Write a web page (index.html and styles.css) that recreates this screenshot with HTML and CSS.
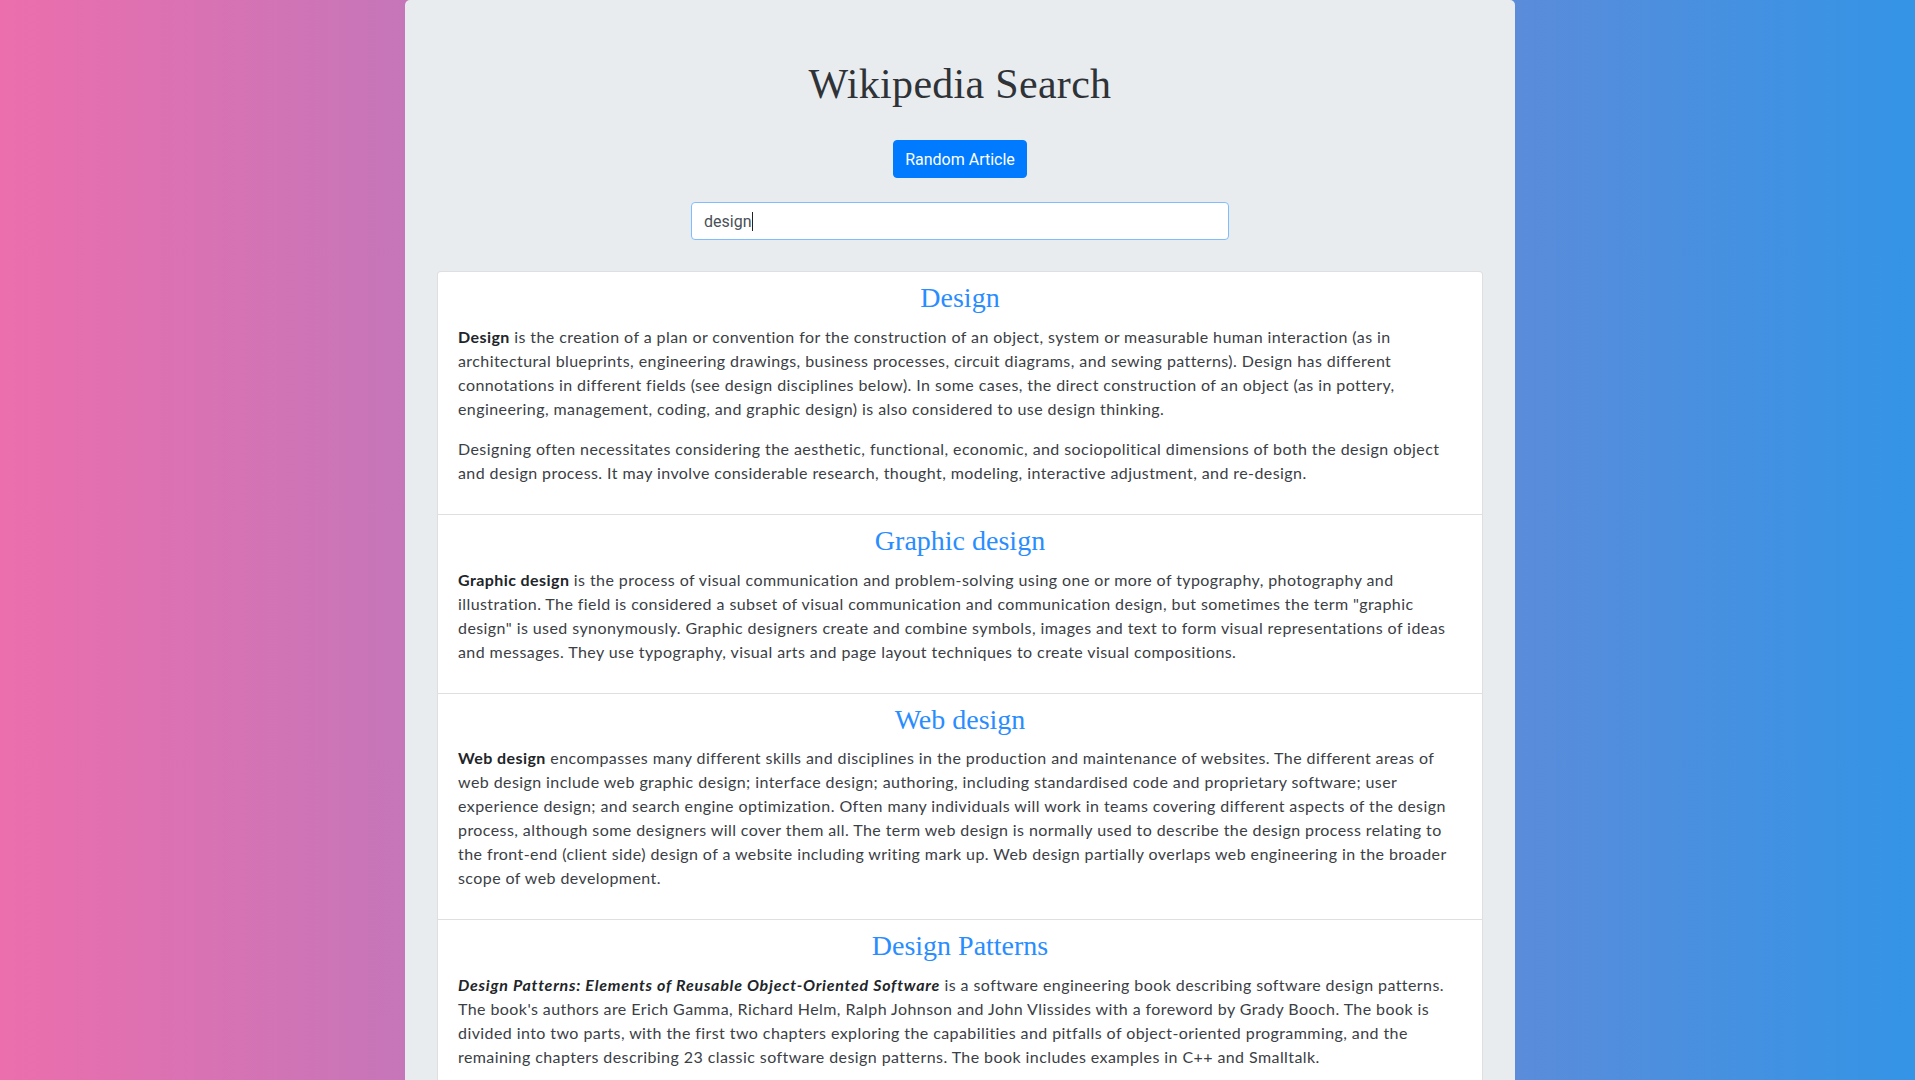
FILE: index.html
```html
<!DOCTYPE html>
<html lang="en">
<head>
<meta charset="utf-8">
<title>Wikipedia Search</title>
<link rel="stylesheet" href="styles.css">
</head>
<body>
<div class="page">
  <main class="jumbo">
    <header class="top">
      <h1 class="title">Wikipedia Search</h1>
      <button class="btn" type="button">Random Article</button>
      <div class="search" role="textbox" aria-label="Search">design<span class="caret"></span></div>
    </header>
    <ul class="results">
      <li class="result">
        <h3 class="result-title">Design</h3>
        <p><b>Design</b> is the creation of a plan or convention for the construction of an object, system or measurable human interaction (as in architectural blueprints, engineering drawings, business processes, circuit diagrams, and sewing patterns). Design has different connotations in different fields (see design disciplines below). In some cases, the direct construction of an object (as in pottery, engineering, management, coding, and graphic design) is also considered to use design thinking.</p>
        <p>Designing often necessitates considering the aesthetic, functional, economic, and sociopolitical dimensions of both the design object and design process. It may involve considerable research, thought, modeling, interactive adjustment, and re-design.</p>
      </li>
      <li class="result">
        <h3 class="result-title">Graphic design</h3>
        <p><b>Graphic design</b> is the process of visual communication and problem-solving using one or more of typography, photography and illustration. The field is considered a subset of visual communication and communication design, but sometimes the term "graphic design" is used synonymously. Graphic designers create and combine symbols, images and text to form visual representations of ideas and messages. They use typography, visual arts and page layout techniques to create visual compositions.</p>
      </li>
      <li class="result">
        <h3 class="result-title">Web design</h3>
        <p><b>Web design</b> encompasses many different skills and disciplines in the production and maintenance of websites. The different areas of web design include web graphic design; interface design; authoring, including standardised code and proprietary software; user experience design; and search engine optimization. Often many individuals will work in teams covering different aspects of the design process, although some designers will cover them all. The term web design is normally used to describe the design process relating to the front-end (client side) design of a website including writing mark up. Web design partially overlaps web engineering in the broader scope of web development.</p>
      </li>
      <li class="result">
        <h3 class="result-title">Design Patterns</h3>
        <p><b class="book"><i>Design Patterns: Elements of Reusable Object-Oriented Software</i></b> is a software engineering book describing software design patterns. The book's authors are Erich Gamma, Richard Helm, Ralph Johnson and John Vlissides with a foreword by Grady Booch. The book is divided into two parts, with the first two chapters exploring the capabilities and pitfalls of object-oriented programming, and the remaining chapters describing 23 classic software design patterns. The book includes examples in C++ and Smalltalk.</p>
      </li>
    </ul>
  </main>
</div>
</body>
</html>
```
FILE: styles.css
```css
html, body {
  margin: 0;
  padding: 0;
}
body {
  background: linear-gradient(to right, #ec6ead, #3494e6);
  min-height: 100vh;
  font-family: "Lato", "Liberation Sans", sans-serif;
  color: #3b4045;
}
.page {
  display: flex;
  justify-content: center;
  padding-left: 5px;
}
.jumbo {
  width: 1110px;
  box-sizing: border-box;
  background: #e9ecef;
  border-radius: 5px;
  padding: 60px 32px 32px;
}
.top {
  display: flex;
  flex-direction: column;
  align-items: center;
}
.title {
  margin: 0;
  font-family: "Liberation Serif", serif;
  font-weight: normal;
  font-size: 42px;
  line-height: 48px;
  color: #2f3338;
  letter-spacing: 0.3px;
}
.btn {
  margin-top: 32px;
  height: 38px;
  padding: 0 11px;
  border: 1px solid #007bff;
  border-radius: 4px;
  background: #007bff;
  color: #fff;
  font-family: "Roboto", "Liberation Sans", sans-serif;
  font-size: 16px;
}
.search {
  margin-top: 24px;
  width: 538px;
  height: 38px;
  box-sizing: border-box;
  padding: 0 12px;
  display: flex;
  align-items: center;
  background: #fff;
  border: 1px solid #80bdff;
  border-radius: 4px;
  font-family: "Roboto", "Liberation Sans", sans-serif;
  font-size: 16px;
  color: #495057;
}
.caret {
  display: inline-block;
  width: 1px;
  height: 19px;
  background: #222;
  margin-left: 1px;
}
.results {
  list-style: none;
  margin: 31px 0 0;
  padding: 0;
  background: #fff;
  border: 1px solid rgba(0, 0, 0, 0.125);
  border-radius: 4px;
}
.result {
  padding: 12px 20px 13px;
  border-top: 1px solid rgba(0, 0, 0, 0.125);
}
.result:first-child {
  border-top: 0;
}
.result-title {
  margin: 0 0 12px;
  text-align: center;
  font-family: "Liberation Serif", serif;
  font-weight: normal;
  font-size: 28px;
  line-height: 28.8px;
  color: #2a8dff;
}
.result p {
  margin: 0 0 16px;
  font-size: 16px;
  line-height: 24px;
  letter-spacing: 0.42px;
}
.result b {
  color: #212529;
  font-weight: bold;
}
.result b.book {
  letter-spacing: 0.75px;
}
```
